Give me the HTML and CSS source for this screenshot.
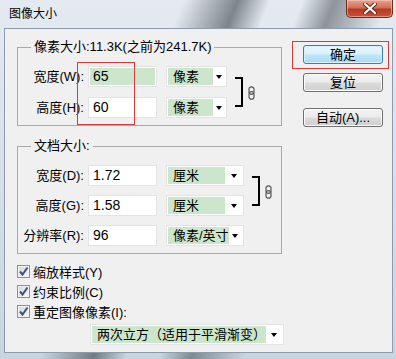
FILE: index.html
```html
<!DOCTYPE html>
<html lang="zh-CN">

<head>
  <meta charset="UTF-8" />
  <title>图像大小</title>
  <link rel="stylesheet" href="styles.css">
</head>

<body>
  <div class="window">
    <div class="titlebar">
      <span class="title">图像大小</span>
      <span class="closeBtn">
        <svg width="14" height="11" viewBox="0 0 14 11">
          <path d="M2 1 L12 10 M12 1 L2 10" stroke="#5a2418" stroke-width="4" stroke-linecap="round" />
          <path d="M2 1 L12 10 M12 1 L2 10" stroke="#fff" stroke-width="2.2" stroke-linecap="round" />
        </svg>
      </span>
    </div>

    <div class="client">
      <div class="mainCol">
        <fieldset class="group">
          <legend>像素大小:11.3K(之前为241.7K)</legend>
          <div class="grid gridPixel">
            <span class="lbl">宽度(W):</span>
            <span class="field"><span class="fieldVal selected">65</span></span>
            <span class="combo narrow"><span class="comboVal">像素</span><span class="comboArrow"></span></span>
            <span class="link">
              <span class="bracket"></span>
              <svg class="chain" width="7" height="14" viewBox="0 0 7 14">
                <rect x="1" y="0.8" width="5" height="7.5" rx="2.5" fill="none" stroke="#555" stroke-width="1.2" />
                <rect x="1" y="5.7" width="5" height="7.5" rx="2.5" fill="none" stroke="#555" stroke-width="1.2" />
              </svg>
            </span>

            <span class="lbl">高度(H):</span>
            <span class="field"><span class="fieldVal">60</span></span>
            <span class="combo narrow"><span class="comboVal">像素</span><span class="comboArrow"></span></span>

            <!-- annotation box drawn over the two inputs -->
            <span class="mark markFields"></span>
          </div>
        </fieldset>

        <fieldset class="group groupDoc">
          <legend>文档大小:</legend>
          <div class="grid gridDoc">
            <span class="lbl">宽度(D):</span>
            <span class="field"><span class="fieldVal">1.72</span></span>
            <span class="combo"><span class="comboVal">厘米</span><span class="comboArrow"></span></span>
            <span class="link">
              <span class="bracket"></span>
              <svg class="chain" width="7" height="14" viewBox="0 0 7 14">
                <rect x="1" y="0.8" width="5" height="7.5" rx="2.5" fill="none" stroke="#555" stroke-width="1.2" />
                <rect x="1" y="5.7" width="5" height="7.5" rx="2.5" fill="none" stroke="#555" stroke-width="1.2" />
              </svg>
            </span>

            <span class="lbl">高度(G):</span>
            <span class="field"><span class="fieldVal">1.58</span></span>
            <span class="combo"><span class="comboVal">厘米</span><span class="comboArrow"></span></span>

            <span class="lbl">分辨率(R):</span>
            <span class="field"><span class="fieldVal">96</span></span>
            <span class="combo"><span class="comboVal">像素/英寸</span><span class="comboArrow"></span></span>
          </div>
        </fieldset>

        <div class="options">
          <div class="check"><span class="box"><svg width="11" height="11" viewBox="0 0 11 11"><path d="M2 5.5 L4.5 8.5 L9.5 1.5" fill="none" stroke="#3d5180" stroke-width="2" /></svg></span>缩放样式(Y)</div>
          <div class="check"><span class="box"><svg width="11" height="11" viewBox="0 0 11 11"><path d="M2 5.5 L4.5 8.5 L9.5 1.5" fill="none" stroke="#3d5180" stroke-width="2" /></svg></span>约束比例(C)</div>
          <div class="check"><span class="box"><svg width="11" height="11" viewBox="0 0 11 11"><path d="M2 5.5 L4.5 8.5 L9.5 1.5" fill="none" stroke="#3d5180" stroke-width="2" /></svg></span>重定图像像素(I):</div>
        </div>

        <span class="combo wide"><span class="comboVal">两次立方（适用于平滑渐变）</span><span class="comboArrow"></span></span>
      </div>

      <div class="sideCol">
        <span class="markOk">
          <span class="btn btnDefault">确定</span>
        </span>
        <span class="btn btnReset">复位</span>
        <span class="btn btnAuto">自动(A)...</span>
      </div>
    </div>
  </div>
</body>

</html>
```

FILE: styles.css
```css
body {
  margin: 0;
  font-family: "Liberation Sans", "Noto Sans CJK SC", sans-serif;
  font-size: 13px;
  color: #000;
}

.window {
  width: 396px;
  height: 359px;
  box-sizing: border-box;
  padding: 0 3px 6px 4px;
  background:
    linear-gradient(112deg, transparent 34%, rgba(45, 50, 58, 0.55) 44%, transparent 50%, transparent 56%, rgba(55, 62, 72, 0.5) 62%, transparent 72%),
    linear-gradient(180deg, #e4eaf0 0%, #c8d5e1 100%);
}

.titlebar {
  height: 28px;
  display: flex;
  justify-content: space-between;
  align-items: flex-start;
}

.title {
  padding-left: 5px;
  font-size: 12px;
  line-height: 28px;
}

.closeBtn {
  width: 47px;
  height: 18px;
  box-sizing: border-box;
  border: 1px solid #6e2d22;
  border-top: none;
  border-radius: 0 0 5px 5px;
  background: linear-gradient(180deg, #e6a593 0%, #d16d58 45%, #b73a22 55%, #c9533a 100%);
  box-shadow: inset 0 0 0 1px rgba(255, 210, 200, 0.5);
  display: flex;
  align-items: center;
  justify-content: center;
}

.client {
  height: 325px;
  box-sizing: border-box;
  border: 1px solid #8c9cae;
  background: #f0f0f0;
  display: flex;
  gap: 8px;
}

.mainCol {
  display: flex;
  flex-direction: column;
  align-items: flex-start;
  padding: 10px 0 0 12px;
}

.group {
  width: 265px;
  box-sizing: border-box;
  margin: 0;
  padding: 11px 0 7px 0;
  border: 1px solid #a9a9a9;
}

.group legend {
  margin-left: 13px;
  padding: 0 3px;
  line-height: 16px;
}

.groupDoc {
  margin-top: 12px;
}

.grid {
  position: relative;
  display: grid;
  grid-template-columns: 66px 74px 61px auto;
  grid-auto-rows: 21px;
  column-gap: 4px;
  row-gap: 10px;
  align-items: stretch;
}

.gridDoc {
  grid-template-columns: 66px 74px 78px auto;
  row-gap: 9px;
}

.lbl {
  text-align: right;
  line-height: 21px;
  white-space: nowrap;
}

.field {
  width: 69px;
  box-sizing: border-box;
  border: 1px solid #e3e3e3;
  background: #fff;
  padding: 1px;
  display: flex;
}

.fieldVal {
  flex: 1;
  padding-left: 3px;
  line-height: 17px;
  font-size: 14px;
}

.selected {
  background: #cce6cc;
}

.combo {
  height: 21px;
  box-sizing: border-box;
  border: 1px solid #e3e3e3;
  background: #fff;
  padding: 1px;
  display: flex;
}

.comboVal {
  flex: 1;
  background: #cce6cc;
  padding-left: 5px;
  line-height: 17px;
  white-space: nowrap;
}

.comboArrow {
  width: 17px;
  display: flex;
  align-items: center;
  justify-content: center;
}

.comboArrow::after {
  content: "";
  border-top: 4px solid #000;
  border-left: 3.5px solid transparent;
  border-right: 3.5px solid transparent;
}

.narrow .comboArrow {
  width: 12px;
}

.link {
  grid-column: 4;
  grid-row: 1 / span 2;
  align-self: center;
  margin-left: 4px;
  display: flex;
  align-items: center;
  gap: 5px;
}

.bracket {
  width: 8px;
  height: 30px;
  box-sizing: border-box;
  border: 2px solid #000;
  border-left: none;
}

.chain {
  margin-top: 2px;
}

/* red annotation over the pixel inputs */
.mark {
  position: absolute;
  border: 1px solid #d63a3a;
}

.markFields {
  left: 59px;
  top: -4px;
  width: 56px;
  height: 61px;
}

.options {
  margin-top: 7px;
}

.check {
  height: 20px;
  display: flex;
  align-items: center;
  gap: 3px;
  white-space: nowrap;
}

.box {
  width: 13px;
  height: 13px;
  flex-shrink: 0;
  box-sizing: border-box;
  border: 1px solid #8e8f8f;
  background: linear-gradient(135deg, #d8d8d8, #f7f7f7);
  box-shadow: inset 0 0 0 1px #f4f4f4;
  display: flex;
  align-items: center;
  justify-content: center;
}

.wide {
  width: 194px;
  margin: 3px 0 0 73px;
}

.sideCol {
  display: flex;
  flex-direction: column;
  align-items: flex-start;
  padding-top: 12px;
}

.markOk {
  width: 97px;
  height: 28px;
  box-sizing: border-box;
  border: 1px solid #d63a3a;
  padding: 3px 0 0 10px;
}

.btn {
  display: block;
  width: 80px;
  height: 19px;
  box-sizing: border-box;
  border: 1px solid #707070;
  border-radius: 3px;
  background: linear-gradient(180deg, #f3f3f3 0%, #ebebeb 48%, #dcdcdc 52%, #cfcfcf 100%);
  box-shadow: inset 0 0 0 1px #fcfcfc;
  text-align: center;
  line-height: 17px;
}

.btnDefault {
  border-color: #3c7fb1;
  background: linear-gradient(180deg, #eaf6fd 0%, #d9f0fc 48%, #bee6fd 52%, #a7d9f5 100%);
  box-shadow: inset 0 0 0 1px #d8f0fd;
}

.btnReset {
  margin: 4px 0 0 11px;
}

.btnAuto {
  margin: 16px 0 0 11px;
}
```
